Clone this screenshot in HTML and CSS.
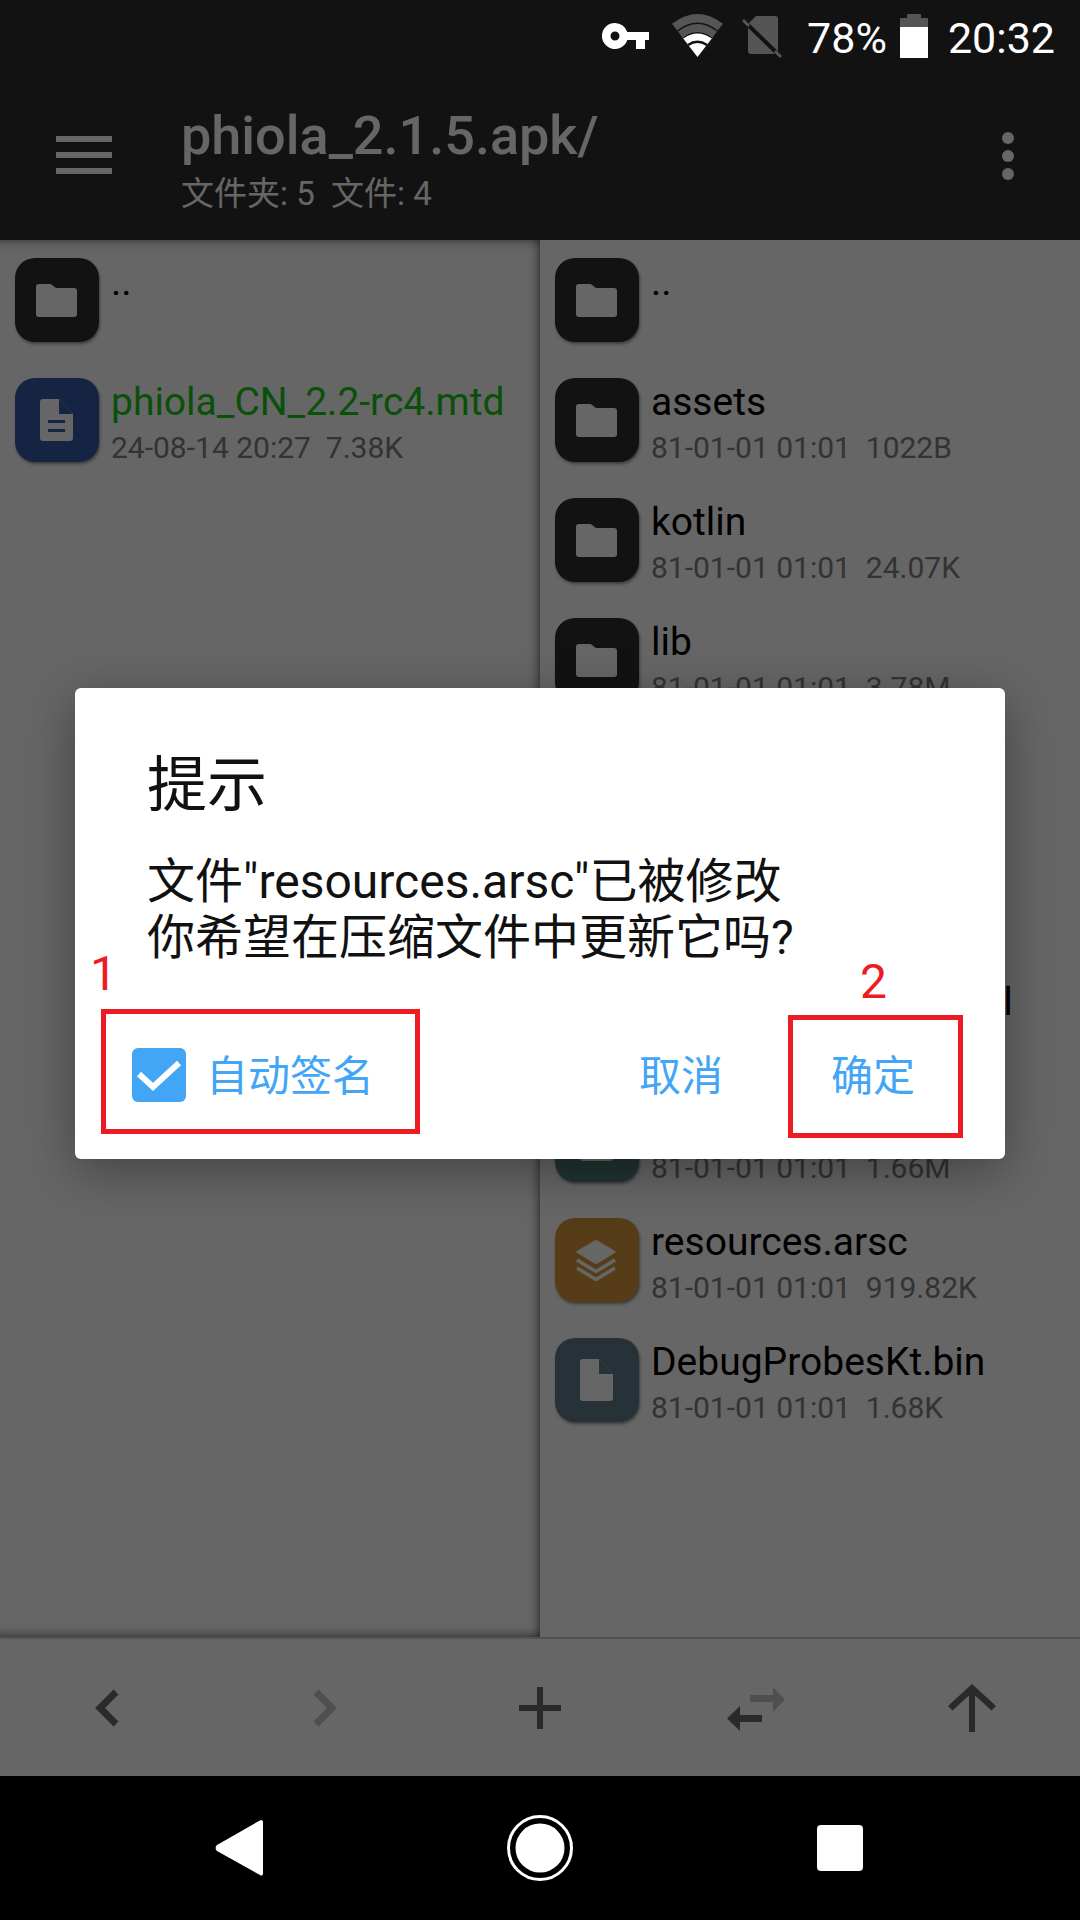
FILE: index.html
```html
<!DOCTYPE html>
<html lang="zh">
<head>
<meta charset="utf-8">
<title>phiola_2.1.5.apk</title>
<link rel="stylesheet" href="styles.css">
</head>
<body>
<div class="phone">
  <header class="status">
    <svg class="ic-key" viewBox="0 0 47 26"><path fill-rule="evenodd" d="M13 0a13 13 0 0 1 12.300 9H47v8h-4v9H34v-9h-8.700A13 13 0 1 1 13 0zm0 8.500a4.500 4.500 0 1 0 0 9 4.500 4.500 0 0 0 0-9z" fill="#fff"/></svg>
    <svg class="ic-wifi" viewBox="0 0 51 43"><path d="M25.500 43L0 9.700Q25.500-9.700 51 9.700z" fill="#555"/><path d="M25.500 43L10.500 23.500Q25.500 13 40.500 23.500z" fill="#fff"/><path d="M5.500 17Q25.500 1.500 45.500 17" fill="none" stroke="#121212" stroke-width="1.500"/><path d="M11 24Q25.500 13.500 40 24" fill="none" stroke="#121212" stroke-width="1.500"/><path d="M16 31Q25.500 24.500 35 31" fill="none" stroke="#121212" stroke-width="2.500"/></svg>
    <svg class="ic-sim" viewBox="0 0 50 52"><path d="M20 6h19a3 3 0 0 1 3 3v32a3 3 0 0 1-3 3H15a3 3 0 0 1-3-3V14z" fill="#555"/><path d="M7 10l38 37" stroke="#121212" stroke-width="4"/><path d="M7 10l6 6M39 41l6 6" stroke="#555" stroke-width="3"/></svg>
    <span class="st-pct">78%</span>
    <svg class="ic-batt" viewBox="0 0 28 44"><path d="M7 0h14v4h7v9H0V4h7z" fill="#555"/><rect y="13" width="28" height="31" fill="#fff"/></svg>
    <span class="st-time">20:32</span>
  </header>

  <main class="app">
    <div class="appbar">
      <div class="burger"><i></i><i></i><i></i></div>
      <div class="path">
        <div class="path-name">phiola_2.1.5.apk/</div>
        <div class="path-info">文件夹: 5&nbsp; 文件: 4</div>
      </div>
      <div class="more"><i></i><i></i><i></i></div>
    </div>

    <div class="panes">
      <section class="pane pane-left">
        <div class="row">
          <div class="tile tile-dir"><svg class="g-dir" viewBox="0 0 41 33"><path d="M3 0h11a3 3 0 0 1 2 1l4 3h18a3 3 0 0 1 3 3v23a3 3 0 0 1-3 3H3a3 3 0 0 1-3-3V3a3 3 0 0 1 3-3z"/></svg></div>
          <div class="meta"><div class="name">..</div></div>
        </div>
        <div class="row">
          <div class="tile tile-doc"><svg class="g-file" viewBox="0 0 33 42"><path fill-rule="evenodd" d="M3 0h16l14 15v24a3 3 0 0 1-3 3H3a3 3 0 0 1-3-3V3a3 3 0 0 1 3-3zM8 21v3h17v-3zM8 30v3h17v-3z"/><path class="fold" d="M19 0l14 15H19z"/></svg></div>
          <div class="meta"><div class="name name-new">phiola_CN_2.2-rc4.mtd</div><div class="sub">24-08-14 20:27&nbsp; 7.38K</div></div>
        </div>
      </section>

      <section class="pane">
        <div class="row">
          <div class="tile tile-dir"><svg class="g-dir" viewBox="0 0 41 33"><path d="M3 0h11a3 3 0 0 1 2 1l4 3h18a3 3 0 0 1 3 3v23a3 3 0 0 1-3 3H3a3 3 0 0 1-3-3V3a3 3 0 0 1 3-3z"/></svg></div>
          <div class="meta"><div class="name">..</div></div>
        </div>
        <div class="row">
          <div class="tile tile-dir"><svg class="g-dir" viewBox="0 0 41 33"><path d="M3 0h11a3 3 0 0 1 2 1l4 3h18a3 3 0 0 1 3 3v23a3 3 0 0 1-3 3H3a3 3 0 0 1-3-3V3a3 3 0 0 1 3-3z"/></svg></div>
          <div class="meta"><div class="name">assets</div><div class="sub">81-01-01 01:01&nbsp; 1022B</div></div>
        </div>
        <div class="row">
          <div class="tile tile-dir"><svg class="g-dir" viewBox="0 0 41 33"><path d="M3 0h11a3 3 0 0 1 2 1l4 3h18a3 3 0 0 1 3 3v23a3 3 0 0 1-3 3H3a3 3 0 0 1-3-3V3a3 3 0 0 1 3-3z"/></svg></div>
          <div class="meta"><div class="name">kotlin</div><div class="sub">81-01-01 01:01&nbsp; 24.07K</div></div>
        </div>
        <div class="row">
          <div class="tile tile-dir"><svg class="g-dir" viewBox="0 0 41 33"><path d="M3 0h11a3 3 0 0 1 2 1l4 3h18a3 3 0 0 1 3 3v23a3 3 0 0 1-3 3H3a3 3 0 0 1-3-3V3a3 3 0 0 1 3-3z"/></svg></div>
          <div class="meta"><div class="name">lib</div><div class="sub">81-01-01 01:01&nbsp; 3.78M</div></div>
        </div>
        <div class="row">
          <div class="tile tile-dir"><svg class="g-dir" viewBox="0 0 41 33"><path d="M3 0h11a3 3 0 0 1 2 1l4 3h18a3 3 0 0 1 3 3v23a3 3 0 0 1-3 3H3a3 3 0 0 1-3-3V3a3 3 0 0 1 3-3z"/></svg></div>
          <div class="meta"><div class="name">META-INF</div><div class="sub">81-01-01 01:01&nbsp; 120K</div></div>
        </div>
        <div class="row">
          <div class="tile tile-dir"><svg class="g-dir" viewBox="0 0 41 33"><path d="M3 0h11a3 3 0 0 1 2 1l4 3h18a3 3 0 0 1 3 3v23a3 3 0 0 1-3 3H3a3 3 0 0 1-3-3V3a3 3 0 0 1 3-3z"/></svg></div>
          <div class="meta"><div class="name">res</div><div class="sub">81-01-01 01:01&nbsp; 1.20M</div></div>
        </div>
        <div class="row">
          <div class="tile tile-bin"><svg class="g-file" viewBox="0 0 33 42"><path d="M3 0h16l14 15v24a3 3 0 0 1-3 3H3a3 3 0 0 1-3-3V3a3 3 0 0 1 3-3z"/><path class="fold" d="M19 0l14 15H19z"/></svg></div>
          <div class="meta"><div class="name">AndroidManifest.xml</div><div class="sub">81-01-01 01:01&nbsp; 9.20K</div></div>
        </div>
        <div class="row">
          <div class="tile tile-dex"><svg class="g-file" viewBox="0 0 33 42"><path d="M3 0h16l14 15v24a3 3 0 0 1-3 3H3a3 3 0 0 1-3-3V3a3 3 0 0 1 3-3z"/><path class="fold" d="M19 0l14 15H19z"/></svg></div>
          <div class="meta"><div class="name">classes.dex</div><div class="sub">81-01-01 01:01&nbsp; 1.66M</div></div>
        </div>
        <div class="row">
          <div class="tile tile-res"><svg class="g-stack" viewBox="0 0 40 41"><path d="M18.500.6a3 3 0 0 1 3 0l17.500 10.400a1 1 0 0 1 0 1.800L21.500 23.400a3 3 0 0 1-3 0L1 12.800a1 1 0 0 1 0-1.800z"/><path class="stack-line" d="M1 20l19 11.500L39 20M1 28l19 11.500L39 28"/></svg></div>
          <div class="meta"><div class="name">resources.arsc</div><div class="sub">81-01-01 01:01&nbsp; 919.82K</div></div>
        </div>
        <div class="row">
          <div class="tile tile-bin"><svg class="g-file" viewBox="0 0 33 42"><path d="M3 0h16l14 15v24a3 3 0 0 1-3 3H3a3 3 0 0 1-3-3V3a3 3 0 0 1 3-3z"/><path class="fold" d="M19 0l14 15H19z"/></svg></div>
          <div class="meta"><div class="name">DebugProbesKt.bin</div><div class="sub">81-01-01 01:01&nbsp; 1.68K</div></div>
        </div>
      </section>
    </div>

    <div class="toolbar">
      <div class="tb-cell"><svg class="tb" viewBox="0 0 60 60"><path class="tb-on" d="M38 14L22 30l16 16" fill="none" stroke-width="7"/></svg></div>
      <div class="tb-cell"><svg class="tb" viewBox="0 0 60 60"><path class="tb-off" d="M22 14l16 16-16 16" fill="none" stroke-width="7"/></svg></div>
      <div class="tb-cell"><svg class="tb" viewBox="0 0 60 60"><path class="tb-fill-on" d="M27 9h6v18h18v6H33v18h-6V33H9v-6h18z"/></svg></div>
      <div class="tb-cell"><svg class="tb" viewBox="0 0 60 60"><path class="tb-fill-off" d="M24 17h23V9l12 12.500L47 34v-10H24z"/><path class="tb-fill-on" d="M36 37H14v-9L1 40.500 14 53v-9h22z"/></svg></div>
      <div class="tb-cell"><svg class="tb" viewBox="0 0 60 60"><path class="tb-fill-on" d="M30 6l24 22-4.500 4.500L33 17.500V54h-6V17.500L10.500 32.500 6 28z"/></svg></div>
    </div>

    <div class="scrim">
      <div class="dialog">
        <h2 class="dlg-title">提示</h2>
        <p class="dlg-body">文件"resources.arsc"已被修改<br>你希望在压缩文件中更新它吗?</p>
        <div class="dlg-actions">
          <div class="check">
            <svg class="box" viewBox="0 0 54 54"><rect width="54" height="54" rx="6" fill="#42a5f5"/><path d="M7 26l14 13 26-24" fill="none" stroke="#fff" stroke-width="6"/></svg>
            <span class="check-label">自动签名</span>
          </div>
          <span class="btn btn-cancel">取消</span>
          <span class="btn btn-ok">确定</span>
        </div>
        <div class="mark mark-1"></div>
        <div class="mark mark-2"></div>
        <span class="num num-1">1</span>
        <span class="num num-2">2</span>
      </div>
    </div>
  </main>

  <footer class="nav">
    <svg class="nav-back" viewBox="0 0 48 56"><path d="M46 0a2 2 0 0 1 2 2v52a2 2 0 0 1-3 1L2 31a4 4 0 0 1 0-6L44 1z" fill="#fff"/></svg>
    <svg class="nav-home" viewBox="0 0 66 66"><circle cx="33" cy="33" r="31.500" fill="none" stroke="#fff" stroke-width="3"/><circle cx="33" cy="33" r="24.500" fill="#fff"/></svg>
    <div class="nav-recent"></div>
  </footer>
</div>
</body>
</html>
```

FILE: styles.css
```css
* { box-sizing: border-box; }
html, body { margin: 0; padding: 0; }
body { width: 1080px; height: 1920px; overflow: hidden; font-family: Roboto, "Noto Sans CJK SC", sans-serif; background: #000; }
svg { display: block; flex: none; }

.phone { width: 1080px; height: 1920px; display: flex; flex-direction: column; }

/* status bar */
.status { height: 72px; background: #121212; display: flex; align-items: center; justify-content: flex-end; padding: 0 25px 0 0; color: #fff; font-size: 43px; line-height: 1; flex: none; }
.ic-key { width: 47px; height: 26px; margin-right: 23px; margin-top: -1px; }
.ic-wifi { width: 51px; height: 43px; margin-right: 13px; margin-top: -1px; }
.ic-sim { width: 50px; height: 52px; margin-right: 21px; }
.st-pct { margin-right: 13px; }
.ic-batt { width: 28px; height: 44px; margin-right: 20px; }
.st-pct, .st-time { position: relative; top: 2px; }

/* app */
.app { position: relative; flex: 1; display: flex; flex-direction: column; background: #fff; min-height: 0; }
.appbar { height: 168px; background: #2e2e2e; display: flex; align-items: flex-start; flex: none; }
.burger { width: 56px; margin: 64px 69px 0 56px; display: flex; flex-direction: column; gap: 10px; }
.burger i { display: block; height: 6px; background: #fff; }
.path { flex: 1; color: #fff; padding-top: 32px; }
.path-name { font-size: 54px; font-weight: 500; line-height: 64px; }
.path-info { font-size: 33px; line-height: 36px; margin-top: 8px; }
.more { width: 12px; margin: 60px 66px 0 0; display: flex; flex-direction: column; gap: 6px; }
.more i { display: block; width: 12px; height: 12px; border-radius: 50%; background: #fff; }

.panes { flex: 1; display: flex; min-height: 0; }
.pane { flex: 1; overflow: hidden; padding-top: 18px; }
.pane-left { flex: 0 0 540px; width: 540px; box-shadow: inset 0 12px 12px -12px rgba(0,0,0,.55), inset -12px 0 12px -12px rgba(0,0,0,.7), inset 0 -12px 12px -12px rgba(0,0,0,.7); }
.row { height: 120px; display: flex; padding-left: 15px; }
.tile { width: 84px; height: 84px; border-radius: 20px; display: flex; align-items: center; justify-content: center; flex: none; box-shadow: 1px 2px 3px rgba(0,0,0,.4); fill: #fff; }
.tile-dir { background: #2e2e2e; }
.tile-doc { background: #345aa6; }
.tile-bin { background: #5f7d8c; }
.tile-dex { background: #558080; }
.tile-res { background: #d89a3c; }
.tile-doc .fold { fill: #345aa6; }
.tile-bin .fold { fill: #5f7d8c; }
.tile-dex .fold { fill: #558080; }
.g-dir { width: 41px; height: 33px; margin-left: -1px; }
.g-file { width: 33px; height: 42px; margin-left: -2px; }
.g-stack { width: 40px; height: 41px; margin-left: -2px; }
.stack-line { fill: none; stroke: #fff; stroke-width: 3.500; }
.meta { margin-left: 12px; margin-top: 1px; min-width: 0; }
.name { font-size: 39px; line-height: 46px; color: #000; white-space: nowrap; }
.name-new { color: #18c818; }
.sub { font-size: 30px; line-height: 38px; margin-top: 4px; color: #808080; white-space: nowrap; }

/* bottom toolbar */
.toolbar { height: 139px; border-top: 2px solid #d0d0d0; display: flex; flex: none; }
.tb-cell { flex: 1; display: flex; align-items: center; justify-content: center; }
.tb { width: 60px; height: 60px; }
.tb-on { stroke: #696969; }
.tb-off { stroke: #c6c6c6; }
.tb-fill-on { fill: #696969; }
.tb-fill-off { fill: #c6c6c6; }

/* dialog */
.scrim { position: absolute; inset: 0; padding-bottom: 1px; background: rgba(0,0,0,.6); display: flex; align-items: center; justify-content: center; }
.dialog { position: relative; width: 930px; height: 471px; background: #fff; border-radius: 6px; display: flex; flex-direction: column; box-shadow: 0 12px 50px rgba(0,0,0,.35); }
.dlg-title { margin: 56px 0 0 72px; font-size: 60px; line-height: 84px; font-weight: 400; color: #111; }
.dlg-body { margin: 26px 0 0 72px; font-size: 48px; line-height: 56px; color: #111; white-space: nowrap; }
.dlg-actions { margin-top: auto; margin-bottom: 2px; height: 164px; display: flex; align-items: center; padding: 0 90px 0 57px; font-size: 42px; color: #42a5f5; }
.check { display: flex; align-items: center; gap: 20px; }
.box { width: 54px; height: 54px; }
.check-label { white-space: nowrap; line-height: 1; margin-top: 4px; }
.btn { line-height: 1; white-space: nowrap; margin-top: 4px; }
.btn-cancel { margin-left: auto; }
.btn-ok { margin-left: 108px; }
.mark { position: absolute; border: 5px solid #ed1c24; }
.mark-1 { left: 26px; top: 321px; width: 319px; height: 125px; }
.mark-2 { left: 713px; top: 327px; width: 175px; height: 123px; }
.num { position: absolute; color: #ed1c24; font-size: 48px; line-height: 1; }
.num-1 { left: 15px; top: 262px; }
.num-2 { left: 785px; top: 270px; }

/* nav */
.nav { height: 144px; background: #000; flex: none; display: flex; align-items: center; }
.nav-back { width: 48px; height: 56px; margin-left: 215px; }
.nav-home { width: 66px; height: 66px; margin-left: 244px; }
.nav-recent { width: 46px; height: 46px; margin-left: 244px; background: #fff; border-radius: 4px; }
```
